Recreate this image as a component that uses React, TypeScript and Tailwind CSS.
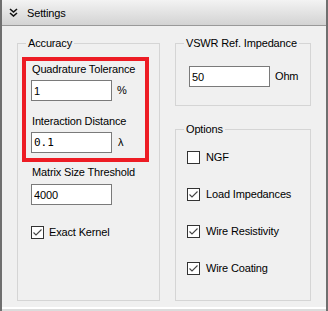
import React from "react";

function GroupBox({
  title,
  className,
  children,
}: {
  title: string;
  className: string;
  children?: React.ReactNode;
}) {
  return (
    <div className={"relative border border-[#d5d5d5] " + className}>
      <span className="absolute left-[8px] top-[-7px] bg-[#f0f0f0] px-[2px] leading-[13px] whitespace-nowrap">
        {title}
      </span>
      {children}
    </div>
  );
}

function TextBox({ value, mono }: { value: string; mono?: boolean }) {
  return (
    <input
      readOnly
      value={value}
      className={
        "box-border h-[21px] w-[81px] border border-[#7a7a7a] bg-white px-[2px] text-[11px] leading-[13px] text-black outline-none " +
        (mono ? "font-['DejaVu_Sans_Mono',monospace] text-[10px] tracking-normal" : "")
      }
    />
  );
}

function CheckBox({ checked, label, gap }: { checked: boolean; label: string; gap: string }) {
  return (
    <div className={"flex h-[13px] items-center " + gap}>
      <div className="box-border flex h-[13px] w-[13px] shrink-0 items-center justify-center border border-[#333333] bg-white">
        {checked && (
          <svg width="11" height="11" viewBox="0 0 11 11">
            <path d="M1.5 5.5 L4 8 L9.5 2.5" fill="none" stroke="#444444" strokeWidth="1.1" />
          </svg>
        )}
      </div>
      <span className="leading-[13px] whitespace-nowrap">{label}</span>
    </div>
  );
}

export default function App() {
  return (
    <div className="flex h-[311px] w-[328px] flex-col overflow-hidden border-x-2 border-[#6f6f6f] bg-[#f0f0f0] font-['Liberation_Sans',Arial,sans-serif] text-[11px] leading-[13px] tracking-[-0.15px] text-black">
      <div className="flex h-[26px] shrink-0 items-center border-b border-[#999999] bg-linear-to-b from-[#f3f3f3] to-[#d3d3d3] pl-[7px]">
        <svg width="9" height="9" viewBox="0 0 9 9" className="shrink-0">
          <path d="M1 1 L4.5 4 L8 1 M1 5 L4.5 8 L8 5" fill="none" stroke="#111111" strokeWidth="1.6" />
        </svg>
        <span className="ml-[9px] mt-[1px] leading-[13px]">Settings</span>
      </div>

      <div className="flex h-[281px] shrink-0 pl-[15px] pt-[17px]">
        <GroupBox title="Accuracy" className="h-[258px] w-[143px] shrink-0">
          <div className="ml-[4px] mt-[13px] box-border h-[105px] w-[127px] border-4 border-[#ed1c24] pl-[5px] pt-[2px]">
            <div className="ml-[1px]">Quadrature Tolerance</div>
            <div className="mt-[4px] flex items-center gap-[5px]">
              <TextBox value="1" />
              <span>%</span>
            </div>
            <div className="ml-[1px] mt-[14px]">Interaction Distance</div>
            <div className="mt-[4px] flex items-center gap-[6px]">
              <TextBox value="0.1" mono />
              <span>λ</span>
            </div>
          </div>
          <div className="ml-[14px] mt-[4px]">Matrix Size Threshold</div>
          <div className="ml-[13px] mt-[5px]">
            <TextBox value="4000" />
          </div>
          <div className="ml-[13px] mt-[21px]">
            <CheckBox checked label="Exact Kernel" gap="gap-[5px]" />
          </div>
        </GroupBox>

        <div className="ml-[15px] flex w-[136px] shrink-0 flex-col">
          <GroupBox title="VSWR Ref. Impedance" className="h-[63px]">
            <div className="ml-[13px] mt-[22px] flex items-center gap-[5px]">
              <TextBox value="50" />
              <span>Ohm</span>
            </div>
          </GroupBox>
          <GroupBox title="Options" className="mt-[23px] h-[172px]">
            <div className="ml-[11px] mt-[21px] flex flex-col gap-[24px]">
              <CheckBox checked={false} label="NGF" gap="gap-[6px]" />
              <CheckBox checked label="Load Impedances" gap="gap-[6px]" />
              <CheckBox checked label="Wire Resistivity" gap="gap-[6px]" />
              <CheckBox checked label="Wire Coating" gap="gap-[6px]" />
            </div>
          </GroupBox>
        </div>
      </div>
      <div className="h-[2px] shrink-0 bg-white" />
      <div className="flex-1 bg-[#dcdcdc]" />
    </div>
  );
}
